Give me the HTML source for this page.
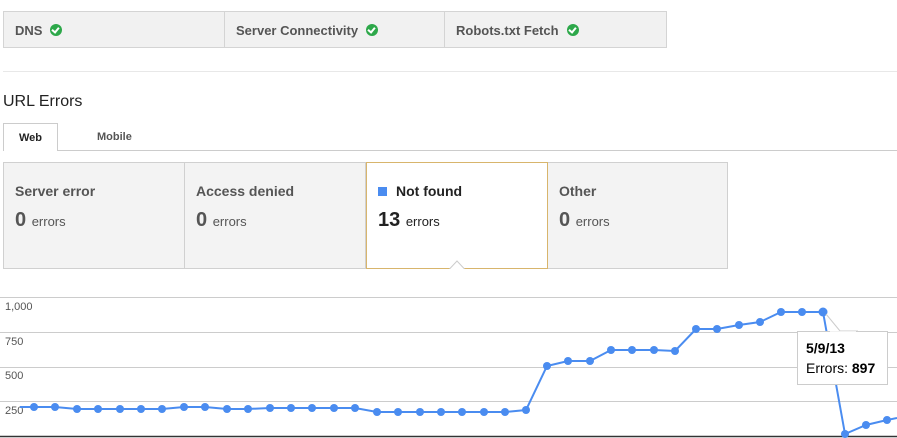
<!DOCTYPE html>
<html><head><meta charset="utf-8"><style>
*{margin:0;padding:0;box-sizing:border-box}
body{width:897px;height:438px;overflow:hidden;background:#fff;font-family:"Liberation Sans",Arial,sans-serif;position:relative;color:#444}
.abs{position:absolute}
.top{left:3px;top:11px;width:664px;height:37px;border:1px solid #d4d4d4;background:#f1f1f1;display:flex}
.top div{border-right:1px solid #d4d4d4;font-size:13px;font-weight:bold;color:#555;padding:11px 0 0 11px;display:flex;align-items:flex-start}
.top div:last-child{border-right:none}
.chk{display:inline-block;width:12px;height:12px;border-radius:50%;background:#2da84a;margin-left:8px;margin-top:1px;position:relative}
.chk:after{content:"";position:absolute;left:3px;top:2px;width:3px;height:5px;border:solid #fff;border-width:0 2px 2px 0;transform:rotate(40deg)}
.cards{left:3px;top:162px;width:725px;height:107px;border:1px solid #d0d0d0;background:#f3f3f3}
.card{position:absolute;top:0;height:105px;border-right:1px solid #d0d0d0;padding:20px 0 0 11px}
.card .t{font-size:14px;font-weight:bold;color:#555}
.card .n{margin-top:10px;font-size:20px;font-weight:bold;color:#555}
.card .n span{font-size:13px;font-weight:normal}
</style></head><body>
<div class="abs top">
<div style="width:221px">DNS<span class="chk"></span></div>
<div style="width:220px">Server Connectivity<span class="chk"></span></div>
<div style="width:221px">Robots.txt Fetch<span class="chk"></span></div>
</div>
<div class="abs" style="left:3px;top:71px;width:894px;height:1px;background:#e8e8e8"></div>
<div class="abs" style="left:3px;top:93px;font-size:16px;color:#222">URL Errors</div>
<div class="abs" style="left:3px;top:150px;width:894px;height:1px;background:#ccc"></div>
<div class="abs" style="left:3px;top:123px;width:55px;height:28px;border:1px solid #ccc;border-bottom:none;background:#fff;font-size:11px;font-weight:bold;color:#222;text-align:center;padding-top:8px">Web</div>
<div class="abs" style="left:97px;top:131px;font-size:11px;font-weight:bold;color:#555">Mobile</div>
<div class="abs cards">
<div class="card" style="left:0;width:181px"><div class="t">Server error</div><div class="n">0 <span>errors</span></div></div>
<div class="card" style="left:181px;width:181px"><div class="t">Access denied</div><div class="n">0 <span>errors</span></div></div>
<div class="card" style="left:362px;width:182px;top:-1px;height:107px;background:#fff;border:1px solid #d8b56c"><div class="t" style="color:#222"><span style="display:inline-block;width:9px;height:9px;background:#4a8cf0;margin-right:9px"></span>Not found</div><div class="n" style="color:#222">13 <span>errors</span></div></div>
<div class="card" style="left:544px;width:180px;border:none"><div class="t">Other</div><div class="n">0 <span>errors</span></div></div>
</div>
<svg class="abs" style="left:449px;top:260px" width="16" height="9"><path d="M0.5 9 L8 1 L15.5 9" fill="#fff" stroke="#ccc"/></svg>
<svg class="abs" style="left:0;top:290px" width="897" height="148">
<g stroke="#ccc" stroke-width="1"><line x1="0" y1="7.5" x2="897" y2="7.5"/><line x1="0" y1="42.5" x2="897" y2="42.5"/><line x1="0" y1="77.5" x2="897" y2="77.5"/><line x1="0" y1="111.5" x2="897" y2="111.5"/></g>
<line x1="0" y1="146.5" x2="897" y2="146.5" stroke="#333" stroke-width="1.5"/>
<g font-size="11" fill="#555" font-family="Liberation Sans"><text x="5" y="20">1,000</text><text x="5" y="55">750</text><text x="5" y="89">500</text><text x="5" y="124">250</text></g>
<polyline fill="none" stroke="#4a8cf0" stroke-width="2" points="20,117 34,117 55,117 77,119 98,119 120,119 141,119 162,119 184,117 205,117 227,119 248,119 270,118 291,118 312,118 334,118 355,118 377,122 398,122 420,122 441,122 462,122 484,122 505,122 526,120 547,76 568,71 590,71 611,60 632,60 654,60 675,61 696,39 717,39 739,35 760,32 781,22 802,22 823,22 845,144 866,135 887,130 897,128"/>
<g fill="#4a8cf0">
<circle cx="34" cy="117" r="4"/><circle cx="55" cy="117" r="4"/><circle cx="77" cy="119" r="4"/><circle cx="98" cy="119" r="4"/><circle cx="120" cy="119" r="4"/><circle cx="141" cy="119" r="4"/><circle cx="162" cy="119" r="4"/><circle cx="184" cy="117" r="4"/><circle cx="205" cy="117" r="4"/><circle cx="227" cy="119" r="4"/><circle cx="248" cy="119" r="4"/><circle cx="270" cy="118" r="4"/><circle cx="291" cy="118" r="4"/><circle cx="312" cy="118" r="4"/><circle cx="334" cy="118" r="4"/><circle cx="355" cy="118" r="4"/><circle cx="377" cy="122" r="4"/><circle cx="398" cy="122" r="4"/><circle cx="420" cy="122" r="4"/><circle cx="441" cy="122" r="4"/><circle cx="462" cy="122" r="4"/><circle cx="484" cy="122" r="4"/><circle cx="505" cy="122" r="4"/><circle cx="526" cy="120" r="4"/><circle cx="547" cy="76" r="4"/><circle cx="568" cy="71" r="4"/><circle cx="590" cy="71" r="4"/><circle cx="611" cy="60" r="4"/><circle cx="632" cy="60" r="4"/><circle cx="654" cy="60" r="4"/><circle cx="675" cy="61" r="4"/><circle cx="696" cy="39" r="4"/><circle cx="717" cy="39" r="4"/><circle cx="739" cy="35" r="4"/><circle cx="760" cy="32" r="4"/><circle cx="781" cy="22" r="4"/><circle cx="802" cy="22" r="4"/><circle cx="823" cy="22" r="4.5"/><circle cx="845" cy="144" r="4"/><circle cx="866" cy="135" r="4"/><circle cx="887" cy="130" r="4"/>
</g>
<path d="M826 24 L840 41 L858 41" fill="#fff" stroke="#ccc"/>
<rect x="797.5" y="41.5" width="90" height="53" fill="#fff" stroke="#ccc"/>
<line x1="830" y1="42" x2="856" y2="42" stroke="#fff" stroke-width="1.5"/>
<text x="806" y="63" font-size="14" font-weight="bold" fill="#000">5/9/13</text>
<text x="806" y="83" font-size="14" fill="#000">Errors: <tspan font-weight="bold">897</tspan></text>
</svg>
</body></html>
